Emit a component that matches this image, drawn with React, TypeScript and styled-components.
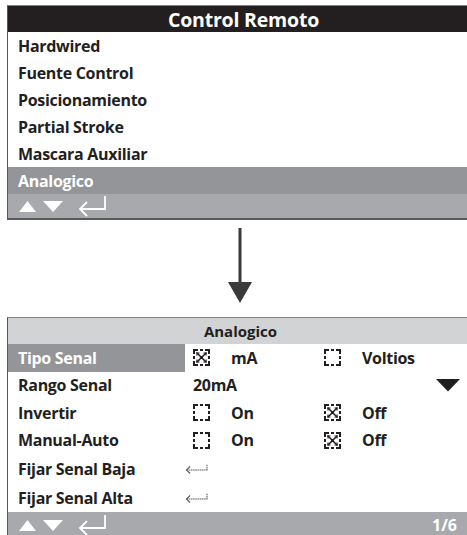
import React, { FC } from 'react';
import styled, { createGlobalStyle } from 'styled-components';

const GlobalStyle = createGlobalStyle`
  html, body {
    margin: 0;
    padding: 0;
    background: #ffffff;
    overflow: hidden;
  }
  body {
    font-family: "Open Sans", "Noto Sans", "Liberation Sans", sans-serif;
    color: #231f20;
  }
`;

const Page = styled.div`
  display: flex;
  flex-direction: column;
  padding-top: 5px;
  padding-left: 7px;
  width: 472px;
`;

const Panel = styled.div`
  display: flex;
  flex-direction: column;
  border-top: 1px solid #808285;
  border-left: 1px solid #58595b;
`;

const DarkHeader = styled.div`
  height: 26px;
  background: #231f20;
  color: #ffffff;
  font-size: 19.5px;
  font-weight: 700;
  display: flex;
  align-items: center;
  justify-content: center;
  letter-spacing: -0.2px;
`;

const LightHeader = styled.div`
  height: 26px;
  background: #d1d3d4;
  font-size: 15px;
  font-weight: 700;
  display: flex;
  align-items: center;
  justify-content: center;
  padding-right: 6px;
`;

const MenuItem = styled.div<{ $active?: boolean }>`
  height: 27px;
  display: flex;
  align-items: center;
  padding-left: 10px;
  font-size: 16px;
  font-weight: 700;
  letter-spacing: -0.3px;
  background: ${({ $active }) => ($active ? '#939598' : 'transparent')};
  color: ${({ $active }) => ($active ? '#ffffff' : '#231f20')};
`;

const Footer = styled.div<{ $height: number }>`
  height: ${({ $height }) => $height}px;
  background: #a7a9ac;
  display: flex;
  align-items: center;
  padding-left: 10px;
  padding-right: 22px;
  color: #ffffff;
  font-size: 16px;
  font-weight: 700;
`;

const TopFooterEdge = styled.div`
  border-bottom: 2px solid #58595b;
`;

const NavIcons = styled.div`
  display: flex;
  align-items: center;
  flex: 1;
`;

const PageNum = styled.span`
  margin-left: auto;
`;

const ArrowWrap = styled.div`
  display: flex;
  padding-left: 221px;
  margin-top: 8px;
  margin-bottom: 13px;
`;

const Table = styled.div`
  display: grid;
  grid-template-columns: 177px 139px 1fr;
`;

const Label = styled.div<{ $active?: boolean; $tall?: boolean }>`
  height: ${({ $tall }) => ($tall ? 29 : 27.5)}px;
  display: flex;
  align-items: center;
  padding-left: 10px;
  font-size: 16px;
  font-weight: 700;
  letter-spacing: -0.3px;
  background: ${({ $active }) => ($active ? '#939598' : 'transparent')};
  color: ${({ $active }) => ($active ? '#ffffff' : '#231f20')};
`;

const Cell = styled.div<{ $pad?: number }>`
  display: flex;
  align-items: center;
  padding-left: ${({ $pad }) => $pad ?? 8}px;
  font-size: 16px;
  font-weight: 700;
  letter-spacing: -0.3px;
`;

const Option = styled.div`
  display: flex;
  align-items: center;
  gap: 21px;
`;

const EndCell = styled(Cell)`
  justify-content: flex-end;
  padding-right: 19px;
`;

const Box: FC<{ checked?: boolean }> = ({ checked }) => (
  <svg width="17" height="17" viewBox="0 0 17 17" fill="none" stroke="#231f20">
    <path
      strokeWidth="2"
      d="M1 5V1H5M12 1H16V5M16 12V16H12M5 16H1V12M7 1H10M16 7V10M7 16H10M1 7V10"
    />
    {checked && (
      <>
        <path strokeWidth="1.5" d="M3.5 3.5L13.5 13.5M13.5 3.5L3.5 13.5" />
        <path
          strokeWidth="1.2"
          d="M4 6.5V4H6.5M13 6.5V4H10.5M4 10.5V13H6.5M13 10.5V13H10.5"
        />
        <circle cx="8.5" cy="8.5" r="1.4" fill="#231f20" stroke="none" />
      </>
    )}
  </svg>
);

const SmallEnter = () => (
  <svg width="24" height="11" viewBox="0 0 24 11" fill="none" stroke="#58595b" strokeWidth="1.1">
    <path d="M1.5 7H22V1" strokeDasharray="1.6 0.6" />
    <path d="M5 3.5L1.5 7L5 10.5" />
  </svg>
);

const NavGlyphs = () => (
  <NavIcons>
    <svg width="50" height="14" viewBox="0 0 50 14" fill="#ffffff">
      <polygon points="1,13 9.5,2 18,13" />
      <polygon points="25,2 45,2 35,13" />
    </svg>
    <svg width="30" height="22" viewBox="0 0 30 22" fill="none" stroke="#ffffff" strokeWidth="1.8" style={{ marginLeft: 10 }}>
      <path d="M2 14H27V1" />
      <path d="M9 7L2 14L9 21" />
    </svg>
  </NavIcons>
);

const DownArrow = () => (
  <svg width="24" height="76" viewBox="0 0 24 76">
    <rect x="10.5" y="0" width="3" height="56" fill="#3a3a3b" />
    <polygon points="0,54 24,54 12,75" fill="#3a3a3b" />
  </svg>
);

const Dropdown = () => (
  <svg width="24" height="13" viewBox="0 0 24 13">
    <polygon points="0,0 24,0 12,12.5" fill="#231f20" />
  </svg>
);

const menu = ['Hardwired', 'Fuente Control', 'Posicionamiento', 'Partial Stroke', 'Mascara Auxiliar'];

const App: FC = () => (
  <>
    <GlobalStyle />
    <Page>
      {/* Control Remoto menu */}
      <Panel>
        <DarkHeader>Control Remoto</DarkHeader>
        {menu.map((m) => (
          <MenuItem key={m}>{m}</MenuItem>
        ))}
        <MenuItem $active>Analogico</MenuItem>
        <TopFooterEdge>
          <Footer $height={24}>
            <NavGlyphs />
          </Footer>
        </TopFooterEdge>
      </Panel>

      <ArrowWrap>
        <DownArrow />
      </ArrowWrap>

      {/* Analogico settings */}
      <Panel>
        <LightHeader>Analogico</LightHeader>
        <Table>
          <Label $active>Tipo Senal</Label>
          <Cell>
            <Option>
              <Box checked />
              mA
            </Option>
          </Cell>
          <Cell $pad={0}>
            <Option>
              <Box />
              Voltios
            </Option>
          </Cell>

          <Label>Rango Senal</Label>
          <Cell>20mA</Cell>
          <EndCell>
            <Dropdown />
          </EndCell>

          <Label>Invertir</Label>
          <Cell>
            <Option>
              <Box />
              On
            </Option>
          </Cell>
          <Cell $pad={0}>
            <Option>
              <Box checked />
              Off
            </Option>
          </Cell>

          <Label>Manual-Auto</Label>
          <Cell>
            <Option>
              <Box />
              On
            </Option>
          </Cell>
          <Cell $pad={0}>
            <Option>
              <Box checked />
              Off
            </Option>
          </Cell>

          <Label $tall>Fijar Senal Baja</Label>
          <Cell $pad={0}>
            <SmallEnter />
          </Cell>
          <Cell />

          <Label $tall>Fijar Senal Alta</Label>
          <Cell $pad={0}>
            <SmallEnter />
          </Cell>
          <Cell />
        </Table>
        <Footer $height={25}>
          <NavGlyphs />
          <PageNum>1/6</PageNum>
        </Footer>
      </Panel>
    </Page>
  </>
);

export default App;
